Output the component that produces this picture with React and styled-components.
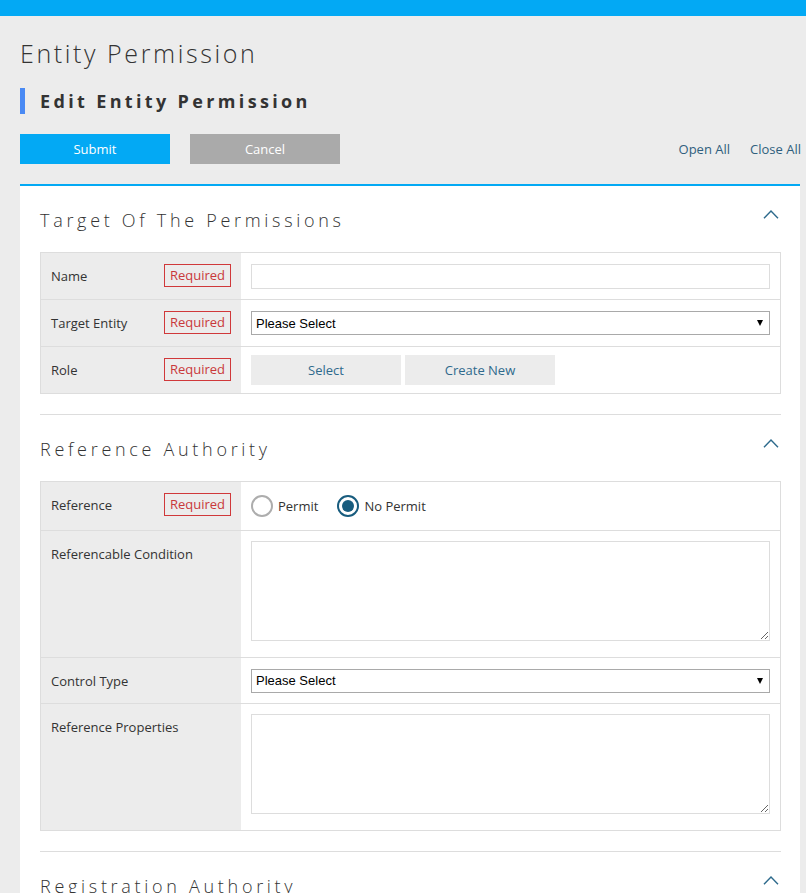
import styled, { createGlobalStyle } from "styled-components";

const sections = [
  {
    title: "Target Of The Permissions",
    rows: [
      { label: "Name", required: true, field: "text" },
      { label: "Target Entity", required: true, field: "select" },
      { label: "Role", required: true, field: "buttons" },
    ],
  },
  {
    title: "Reference Authority",
    rows: [
      { label: "Reference", required: true, field: "radio" },
      { label: "Referencable Condition", field: "textarea" },
      { label: "Control Type", field: "select", compact: true },
      { label: "Reference Properties", field: "textarea" },
    ],
  },
  {
    title: "Registration Authority",
    rows: [
      { label: "Registration", required: true, field: "radio" },
      { label: "Registrable Condition", field: "textarea" },
      { label: "Control Type", field: "select", compact: true },
    ],
  },
];

function Chevron() {
  return (
    <ChevronIcon width="16" height="9" viewBox="0 0 16 9">
      <polyline points="1,8.2 8,1 15,8.2" fill="none" stroke="#2d6a8c" strokeWidth="1.4" />
    </ChevronIcon>
  );
}

function Field({ type }) {
  if (type === "text") return <TextInput type="text" />;
  if (type === "select")
    return (
      <SelectWrap>
        <Select defaultValue="">
          <option value="">Please Select</option>
        </Select>
      </SelectWrap>
    );
  if (type === "buttons")
    return (
      <ButtonGroup>
        <GrayButton type="button">Select</GrayButton>
        <GrayButton type="button">Create New</GrayButton>
      </ButtonGroup>
    );
  if (type === "radio")
    return (
      <RadioGroup>
        <RadioLabel>
          <RadioMark />
          Permit
        </RadioLabel>
        <RadioLabel>
          <RadioMark $checked />
          No Permit
        </RadioLabel>
      </RadioGroup>
    );
  return <TextArea />;
}

export default function App() {
  return (
    <>
      <GlobalStyle />
      <TopBar />
      <Main>
        <PageTitle>Entity Permission</PageTitle>
        <SubTitle>Edit Entity Permission</SubTitle>
        <Toolbar>
          <Actions>
            <ActionButton type="button" $primary>
              Submit
            </ActionButton>
            <ActionButton type="button">Cancel</ActionButton>
          </Actions>
          <Links>
            <LinkText>Open All</LinkText>
            <LinkText>Close All</LinkText>
          </Links>
        </Toolbar>

        <Panel>
          {sections.map((s) => (
            <Section key={s.title}>
              <SectionHeader>
                <SectionTitle>{s.title}</SectionTitle>
                <Chevron />
              </SectionHeader>
              <Table>
                {s.rows.map((r, i) => (
                  <Row key={i}>
                    <LabelCell $compact={r.compact}>
                      <span>{r.label}</span>
                      {r.required && <Badge>Required</Badge>}
                    </LabelCell>
                    <ValueCell $tall={r.field === "textarea"} $compact={r.compact}>
                      <Field type={r.field} />
                    </ValueCell>
                  </Row>
                ))}
              </Table>
            </Section>
          ))}
        </Panel>
      </Main>
    </>
  );
}

/* ====== styles ====== */
const GlobalStyle = createGlobalStyle`
  html, body {
    margin: 0;
    padding: 0;
    background: #ececec;
  }
  body {
    font-family: "Segoe UI", "Open Sans", sans-serif;
    font-size: 13px;
    color: #333;
  }
  * { box-sizing: border-box; }
`;

const TopBar = styled.div`
  height: 16px;
  background: #03a9f4;
`;

const Main = styled.main`
  padding: 0 6px 0 20px;
`;

const PageTitle = styled.h1`
  margin: 19px 0 0;
  font-size: 25px;
  line-height: 36px;
  font-weight: 300;
  letter-spacing: 2.6px;
  color: #333;
`;

const SubTitle = styled.h2`
  margin: 17px 0 0;
  border-left: 5px solid #4a8af4;
  padding-left: 15px;
  font-size: 18px;
  line-height: 26px;
  font-weight: 700;
  letter-spacing: 3.35px;
  color: #333;
`;

const Toolbar = styled.div`
  display: flex;
  justify-content: space-between;
  align-items: center;
  margin-top: 20px;
`;

const Actions = styled.div`
  display: flex;
  gap: 20px;
`;

const ActionButton = styled.button`
  width: 150px;
  height: 30px;
  border: none;
  padding: 0;
  font-family: inherit;
  font-size: 13px;
  color: #fff;
  background: ${({ $primary }) => ($primary ? "#03a9f4" : "#aaaaaa")};
  cursor: pointer;
`;

const Links = styled.div`
  display: flex;
  gap: 20px;
  margin-right: -1px;
`;

const LinkText = styled.a`
  font-size: 13px;
  color: #2f5f7e;
  cursor: pointer;
`;

const Panel = styled.section`
  margin-top: 20px;
  background: #fff;
  border-top: 2px solid #03a9f4;
  padding: 0 19px 0 20px;
`;

const Section = styled.div`
  padding: 21px 0 20px;
  border-bottom: 1px solid #ddd;
`;

const SectionHeader = styled.div`
  display: flex;
  justify-content: space-between;
  align-items: flex-start;
  margin-bottom: 19px;
`;

const SectionTitle = styled.h3`
  margin: 0;
  font-size: 18px;
  line-height: 26px;
  font-weight: 300;
  letter-spacing: 3.7px;
  color: #333;
`;

const ChevronIcon = styled.svg`
  display: block;
  margin: 3px 2px 0 0;
`;

const Table = styled.div`
  border: 1px solid #ddd;
`;

const Row = styled.div`
  display: grid;
  grid-template-columns: 200px 1fr;
  & + & {
    border-top: 1px solid #ddd;
  }
`;

const LabelCell = styled.div`
  display: flex;
  justify-content: space-between;
  align-items: flex-start;
  padding: ${({ $compact }) => ($compact ? "13px 10px 12px" : "13px 10px")};
  line-height: 20px;
  background: #ececec;
  color: #333;
`;

const Badge = styled.span`
  width: 67px;
  height: 23px;
  margin: -2px 0 -2px;
  border: 1px solid #d0383a;
  color: #c9383a;
  text-align: center;
  line-height: 21px;
`;

const ValueCell = styled.div`
  display: flex;
  align-items: ${({ $tall }) => ($tall ? "flex-start" : "center")};
  padding: ${({ $tall }) => ($tall ? "10px 10px 16px" : "0 10px")};
  min-height: ${({ $compact }) => ($compact ? "45px" : "46px")};
`;

const TextInput = styled.input`
  width: 100%;
  height: 25px;
  border: 1px solid #ddd;
  padding: 0 5px;
  outline: none;
`;

const SelectWrap = styled.div`
  position: relative;
  width: 100%;
  &::after {
    content: "";
    position: absolute;
    right: 7px;
    top: 9px;
    border-left: 3.5px solid transparent;
    border-right: 3.5px solid transparent;
    border-top: 6px solid #000;
    pointer-events: none;
  }
`;

const Select = styled.select`
  display: block;
  width: 100%;
  height: 24px;
  border: 1px solid #a9a9a9;
  border-radius: 0;
  padding: 0 0 0 4px;
  background: #fff;
  appearance: none;
  font-family: "Liberation Sans", Arial, sans-serif;
  font-size: 13px;
  color: #000;
  outline: none;
`;

const ButtonGroup = styled.div`
  display: flex;
  gap: 4px;
`;

const GrayButton = styled.button`
  width: 150px;
  height: 30px;
  border: none;
  background: #ececec;
  font-family: inherit;
  font-size: 13px;
  color: #2f6a8c;
  cursor: pointer;
`;

const RadioGroup = styled.div`
  display: flex;
  align-items: center;
  gap: 19px;
  height: 48px;
`;

const RadioLabel = styled.label`
  display: flex;
  align-items: center;
  gap: 5px;
  font-size: 13px;
  color: #333;
`;

const RadioMark = styled.span`
  position: relative;
  width: 22px;
  height: 22px;
  border-radius: 50%;
  border: 2px solid ${({ $checked }) => ($checked ? "#185c7e" : "#adadad")};
  background: #fff;
  &::after {
    content: "";
    display: ${({ $checked }) => ($checked ? "block" : "none")};
    position: absolute;
    inset: 3px;
    border-radius: 50%;
    background: #185c7e;
  }
`;

const TextArea = styled.textarea`
  display: block;
  width: 100%;
  height: 100px;
  border: 1px solid #ddd;
  resize: vertical;
  outline: none;
`;
